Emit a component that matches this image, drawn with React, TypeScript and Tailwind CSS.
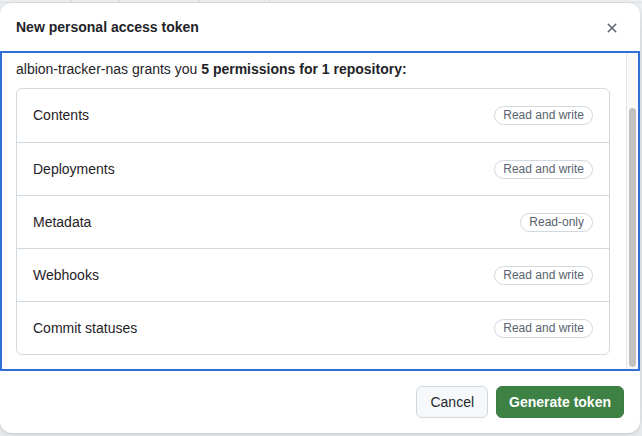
type Permission = { name: string; access: string }

const permissions: Permission[] = [
  { name: 'Contents', access: 'Read and write' },
  { name: 'Deployments', access: 'Read and write' },
  { name: 'Metadata', access: 'Read-only' },
  { name: 'Webhooks', access: 'Read and write' },
  { name: 'Commit statuses', access: 'Read and write' },
]

function XIcon() {
  return (
    <svg width="16" height="16" viewBox="0 0 16 16" fill="currentColor" aria-hidden>
      <path d="M3.72 3.72a.75.75 0 0 1 1.06 0L8 6.94l3.22-3.22a.749.749 0 0 1 1.275.326.749.749 0 0 1-.215.734L9.06 8l3.22 3.22a.749.749 0 0 1-.326 1.275.749.749 0 0 1-.734-.215L8 9.06l-3.22 3.22a.751.751 0 0 1-1.042-.018.751.751 0 0 1-.018-1.042L6.94 8 3.72 4.78a.75.75 0 0 1 0-1.06Z" />
    </svg>
  )
}

export default function App() {
  return (
    <div className="relative h-[436px] w-[642px] overflow-hidden bg-[#eef0f2] font-['Liberation_Sans',Arial,sans-serif] text-[#1f2328]">
      {/* page behind the dialog */}
      <div className="flex h-[3px] border-b border-[#dfe2e5]">
        <div className="w-[72px] border-r border-[#d5d8dc]" />
        <div className="w-[48px] border-r border-[#d5d8dc]" />
        <div className="w-[80px] border-r border-[#d5d8dc]" />
        <div className="w-[70px] border-r border-[#d5d8dc]" />
      </div>

      <div className="flex h-[430px] w-[640px] flex-col rounded-xl bg-white shadow-[0_1px_3px_rgba(31,35,40,0.12),0_8px_24px_rgba(66,74,83,0.12)]">
        <div className="flex h-[48px] shrink-0 items-center justify-between pl-4 pr-[16px] pt-[1px]">
          <h1 className="text-[14px] font-semibold">New personal access token</h1>
          <button type="button" className="flex h-6 w-6 items-center justify-center text-[#59636e]">
            <XIcon />
          </button>
        </div>

        {/* scroll area, shown scrolled to the end */}
        <div className="flex h-[320px] shrink-0 overflow-hidden border-2 border-[#2f6fd6]">
          <div className="min-w-0 flex-1 pl-[14px] pr-4 pt-[6px]">
            <p className="mb-[9px] text-[14px] leading-5">
              albion-tracker-nas grants you <span className="font-bold">5 permissions for 1 repository:</span>
            </p>
            <div className="rounded-md border border-[#d1d9e0]">
              {permissions.map((p, i) => (
                <div
                  key={p.name}
                  className={`flex items-center justify-between px-4 ${i > 0 ? 'h-[53px] border-t border-[#d1d9e0]' : 'h-[53px]'}`}
                >
                  <span className="text-[14px]">{p.name}</span>
                  <span className="rounded-full border border-[#d1d9e0] px-2 text-[12px] leading-[17px] text-[#59636e]">
                    {p.access}
                  </span>
                </div>
              ))}
            </div>
          </div>
          <div className="w-[12px] shrink-0 border-l border-[#e6e6e6] bg-[#fafafa] px-[2px] pt-[55px] pb-[2px]">
            <div className="h-[259px] rounded-full bg-[#c1c1c1]" />
          </div>
        </div>

        <div className="flex flex-1 items-center justify-end gap-2 px-4">
          <button
            type="button"
            className="h-8 rounded-md border border-[#d1d9e0] bg-[#f6f8fa] px-[13px] text-[14px] font-medium text-[#25292e]"
          >
            Cancel
          </button>
          <button
            type="button"
            className="h-8 rounded-md border border-[#3a7c42] bg-[#3d8145] px-3 text-[14px] font-semibold text-white"
          >
            Generate token
          </button>
        </div>
      </div>
    </div>
  )
}
